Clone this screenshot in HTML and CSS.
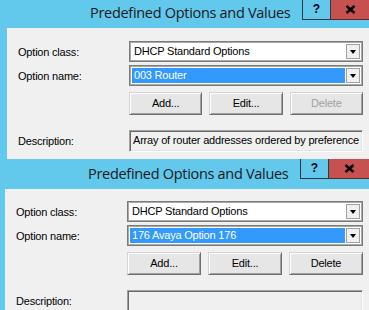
FILE: index.html
```html
<!DOCTYPE html>
<html lang="en">
<head>
    <meta charset="UTF-8">
    <title>Predefined Options and Values</title>
    <link rel="stylesheet" href="styles.css">
</head>
<body>

    <div class="window first">
        <div class="titlebar">
            <span class="title">Predefined Options and Values</span>
            <div class="caption-btns">
                <span class="help-btn">?</span>
                <span class="close-btn">
                    <svg width="11" height="9" viewBox="0 0 11 9"><path d="M1.5 1 L9.5 8 M9.5 1 L1.5 8" stroke="#000" stroke-width="2.4"/></svg>
                </span>
            </div>
        </div>
        <div class="client">
            <div class="field">
                <span class="label">Option class:</span>
                <div class="combo"><span class="combo-text">DHCP Standard Options</span><span class="drop"></span></div>
            </div>
            <div class="field">
                <span class="label">Option name:</span>
                <div class="combo"><span class="combo-text selected">003 Router</span><span class="drop"></span></div>
            </div>
            <div class="field buttons-row">
                <span></span>
                <div class="buttons">
                    <span class="btn">Add...</span>
                    <span class="btn">Edit...</span>
                    <span class="btn disabled">Delete</span>
                </div>
            </div>
            <div class="field desc-row">
                <span class="label">Description:</span>
                <div class="desc">Array of router addresses ordered by preference</div>
            </div>
        </div>
    </div>

    <div class="window second">
        <div class="titlebar">
            <span class="title">Predefined Options and Values</span>
            <div class="caption-btns">
                <span class="help-btn">?</span>
                <span class="close-btn">
                    <svg width="11" height="9" viewBox="0 0 11 9"><path d="M1.5 1 L9.5 8 M9.5 1 L1.5 8" stroke="#000" stroke-width="2.4"/></svg>
                </span>
            </div>
        </div>
        <div class="client">
            <div class="field">
                <span class="label">Option class:</span>
                <div class="combo"><span class="combo-text">DHCP Standard Options</span><span class="drop"></span></div>
            </div>
            <div class="field">
                <span class="label">Option name:</span>
                <div class="combo"><span class="combo-text selected">176 Avaya Option 176</span><span class="drop"></span></div>
            </div>
            <div class="field buttons-row">
                <span></span>
                <div class="buttons">
                    <span class="btn">Add...</span>
                    <span class="btn">Edit...</span>
                    <span class="btn">Delete</span>
                </div>
            </div>
            <div class="field desc-row">
                <span class="label">Description:</span>
                <div class="desc"></div>
            </div>
        </div>
    </div>

</body>
</html>
```

FILE: styles.css
```css
body {
    margin: 0;
    padding: 0;
    width: 369px;
    height: 310px;
    overflow: hidden;
    background-color: #62c8ec;
    font-family: "Liberation Sans", Arial, sans-serif;
    font-size: 11px;
    letter-spacing: -0.2px;
    color: #000;
}

.window {
    display: flex;
    flex-direction: column;
}

.first {
    padding-left: 7px;
}

.second {
    padding-left: 5px;
}

.titlebar {
    display: flex;
    align-items: flex-start;
    height: 28px;
}

.second .titlebar {
    height: 30px;
}

.title {
    font-family: "Open Sans", "Noto Sans", sans-serif;
    font-size: 14.5px;
    letter-spacing: -0.3px;
    line-height: 20px;
    color: #1a1a1a;
    padding-left: 83px;
    padding-top: 3px;
    white-space: nowrap;
    flex-shrink: 0;
}

.second .title {
    padding-top: 5px;
}

.caption-btns {
    display: flex;
    margin-left: auto;
    height: 20px;
}

.help-btn {
    width: 27px;
    height: 19px;
    border: 1px solid #2a3a40;
    border-top: none;
    text-align: center;
    font-weight: bold;
    font-size: 12px;
    line-height: 18px;
    letter-spacing: 0;
}

.close-btn {
    width: 38px;
    height: 19px;
    background-color: #c75050;
    border-bottom: 1px solid #5a2a2a;
    display: flex;
    justify-content: center;
    align-items: center;
}

.second .close-btn {
    width: 40px;
}

.client {
    background-color: #f0f0f0;
    padding: 13px 6px 0 11px;
    display: flex;
    flex-direction: column;
    gap: 3px;
}

.first .client {
    height: 131px;
    box-sizing: border-box;
}

.second .client {
    padding-top: 12px;
    height: 130px;
    box-sizing: border-box;
}

.field {
    display: grid;
    grid-template-columns: 111px 1fr;
    align-items: center;
}

.buttons-row {
    margin-top: 3px;
}

.desc-row {
    margin-top: 12px;
}

.combo {
    height: 21px;
    box-sizing: border-box;
    border: 1px solid #7a7a7a;
    box-shadow: inset 0 0 0 1px #a9a9a9;
    background-color: #fff;
    display: flex;
    align-items: stretch;
    padding: 2px;
}

.combo-text {
    flex: 1;
    padding-left: 2px;
    line-height: 15px;
}

.combo-text.selected {
    background-color: #3399ff;
    color: #fff;
    margin-right: 1px;
}

.drop {
    width: 14px;
    box-sizing: border-box;
    border: 1px solid #a0a0a0;
    background-color: #f0f0f0;
    display: flex;
    justify-content: center;
    align-items: center;
}

.drop::after {
    content: "";
    border-left: 3.5px solid transparent;
    border-right: 3.5px solid transparent;
    border-top: 4px solid #000;
    margin-top: 1px;
}

.buttons {
    display: grid;
    grid-template-columns: repeat(3, 1fr);
    gap: 7px;
}

.btn {
    height: 23px;
    box-sizing: border-box;
    border: 1px solid;
    border-color: #d4d4d4 #6e6e6e #6e6e6e #d4d4d4;
    box-shadow: inset 1px 1px 0 #fff, inset -1px -1px 0 #a0a0a0;
    background-color: #e6e6e6;
    text-align: center;
    line-height: 21px;
}

.btn.disabled {
    color: #a0a0a0;
}

.desc {
    height: 22px;
    box-sizing: border-box;
    border: 1px solid;
    border-color: #a0a0a0 #fff #fff #a0a0a0;
    box-shadow: inset 1px 1px 0 #696969, inset -1px -1px 0 #e3e3e3;
    padding-left: 3px;
    line-height: 19px;
    white-space: nowrap;
    overflow: hidden;
}
```
